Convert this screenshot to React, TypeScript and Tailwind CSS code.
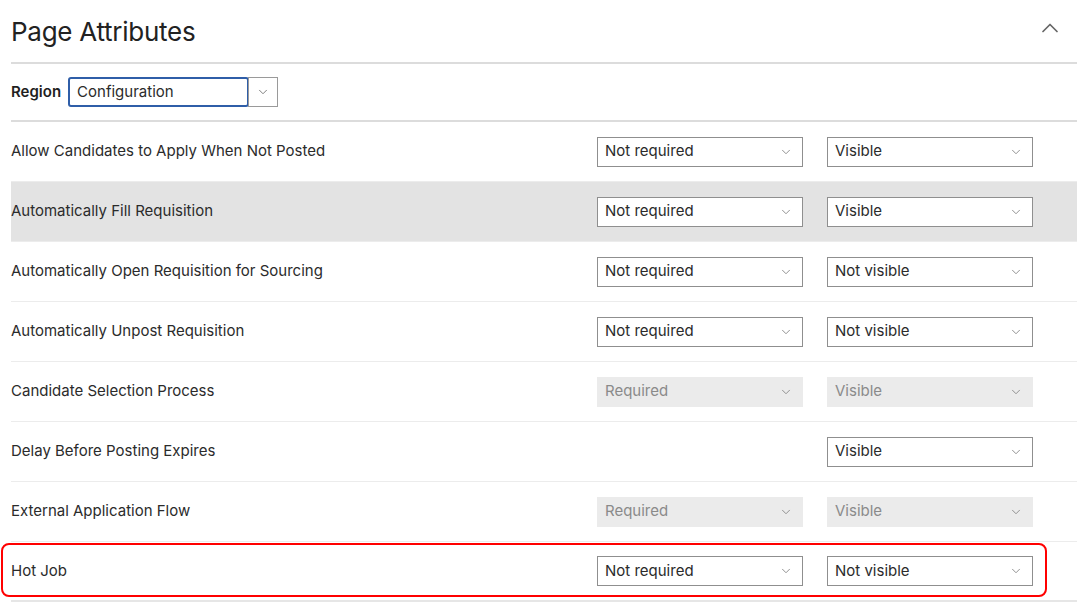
import { ChevronDown, ChevronUp } from "lucide-react";

type Row = {
  label: string;
  required?: string;
  requiredDisabled?: boolean;
  visible: string;
  visibleDisabled?: boolean;
  shaded?: boolean;
};

const rows: Row[] = [
  { label: "Allow Candidates to Apply When Not Posted", required: "Not required", visible: "Visible" },
  { label: "Automatically Fill Requisition", required: "Not required", visible: "Visible", shaded: true },
  { label: "Automatically Open Requisition for Sourcing", required: "Not required", visible: "Not visible" },
  { label: "Automatically Unpost Requisition", required: "Not required", visible: "Not visible" },
  { label: "Candidate Selection Process", required: "Required", requiredDisabled: true, visible: "Visible", visibleDisabled: true },
  { label: "Delay Before Posting Expires", visible: "Visible" },
  { label: "External Application Flow", required: "Required", requiredDisabled: true, visible: "Visible", visibleDisabled: true },
  { label: "Hot Job", required: "Not required", visible: "Not visible" },
];

function Select({ value, disabled }: { value: string; disabled?: boolean }) {
  return (
    <div
      className={
        disabled
          ? "flex h-[30px] w-[206px] items-center justify-between bg-[#ebebeb] pl-[8px] pr-[10px] text-[#8a8a8a]"
          : "flex h-[30px] w-[206px] items-center justify-between border border-[#8f8f8f] bg-white pl-[7px] pr-[9px] text-[#2b2b2b]"
      }
    >
      <span>{value}</span>
      <ChevronDown size={14} strokeWidth={1.6} className="text-[#8a8a8a]" />
    </div>
  );
}

export default function App() {
  return (
    <div
      className="relative min-h-[607px] w-[1087px] bg-white text-[15px] text-[#2b2b2b]"
      style={{ fontFamily: "Inter, 'Noto Sans', sans-serif" }}
    >
      <div className="ml-[11px] w-[1066px]">
        <div className="flex h-[64px] items-center justify-between border-b-2 border-[#dcdcdc] pr-[13px]">
          <h1 className="text-[26px] tracking-[-0.01em] text-[#222]">Page Attributes</h1>
          <ChevronUp size={28} strokeWidth={1.5} className="-mt-[6px] text-[#666]" />
        </div>

        <div className="flex h-[58px] items-center gap-[7px] border-b-2 border-[#dcdcdc]">
          <span className="font-semibold text-[#1f1f1f]">Region</span>
          <div className="flex h-[30px] items-stretch">
            <div className="flex w-[181px] items-center rounded-[3px] border-2 border-[#2f5ea8] pl-[7px] text-[#2b2b2b]">
              Configuration
            </div>
            <div className="-ml-[1px] flex w-[30px] items-center justify-center border border-[#9a9a9a]">
              <ChevronDown size={14} strokeWidth={1.6} className="text-[#777]" />
            </div>
          </div>
        </div>

        {rows.map((row, i) => (
          <div
            key={row.label}
            className={
              (row.shaded ? "bg-[#e3e3e3] " : "bg-white ") +
              "flex h-[60px] items-center " +
              (i < rows.length - 1 ? "border-b border-[#ececec]" : "border-b-2 border-[#e6e6e6]")
            }
          >
            <span className="flex-1">{row.label}</span>
            <div className="flex gap-[24px] pr-[44px]">
              {row.required ? (
                <Select value={row.required} disabled={row.requiredDisabled} />
              ) : (
                <div className="w-[206px]" />
              )}
              <Select value={row.visible} disabled={row.visibleDisabled} />
            </div>
          </div>
        ))}
      </div>

      <div className="pointer-events-none absolute left-[1px] top-[543px] h-[54px] w-[1046px] rounded-[8px] border-2 border-[#ff0000]" />
    </div>
  );
}
